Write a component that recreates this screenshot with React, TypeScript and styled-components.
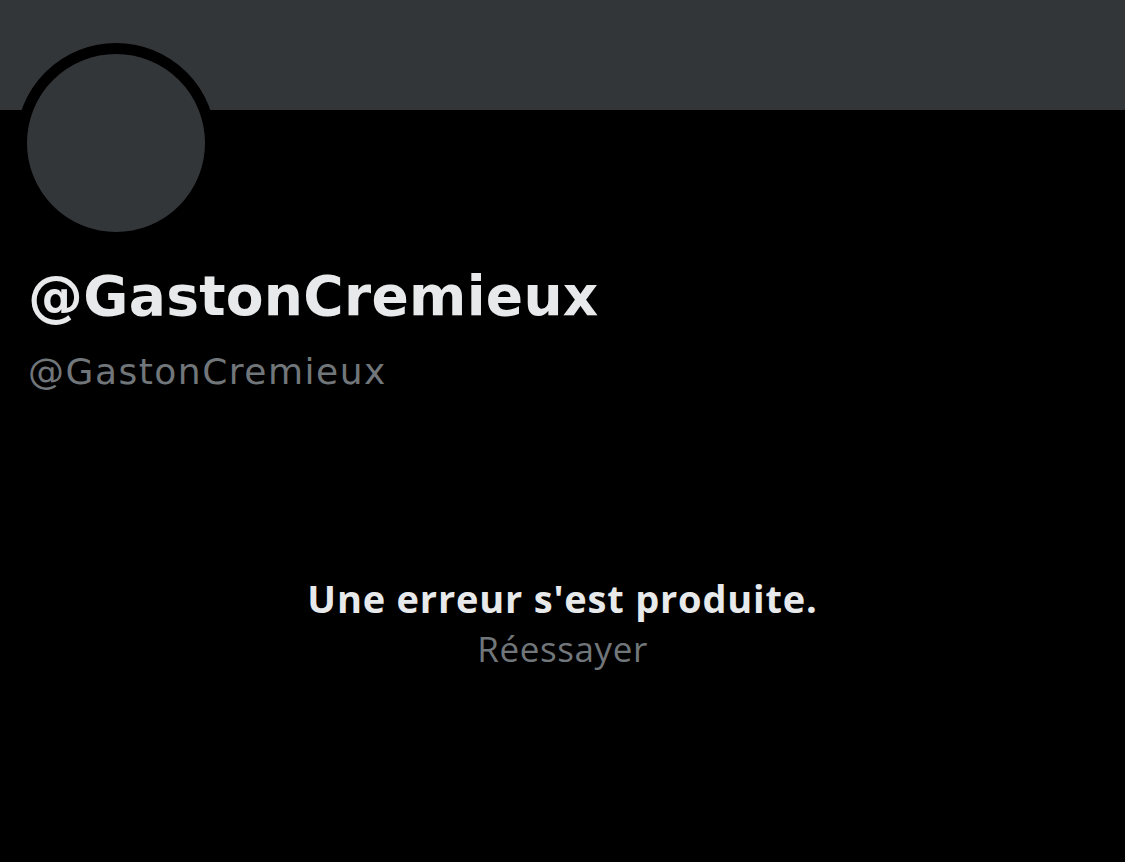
import React from 'react';
import { styled, createGlobalStyle } from 'styled-components';

const GlobalStyle = createGlobalStyle`
  html, body {
    margin: 0;
    padding: 0;
    background: #000;
  }
  body {
    font-family: "Open Sans", "Liberation Sans", Arial, sans-serif;
    -webkit-font-smoothing: antialiased;
  }
`;

export default function App() {
  return (
    <Page>
      <GlobalStyle />
      <Banner />
      <ProfileHead>
        <Avatar />
        <DisplayName>@GastonCremieux</DisplayName>
        <Handle>@GastonCremieux</Handle>
      </ProfileHead>
      <ErrorBlock>
        <ErrorTitle>Une erreur s'est produite.</ErrorTitle>
        <RetryButton type="button">Réessayer</RetryButton>
      </ErrorBlock>
    </Page>
  );
}

const Page = styled.div`
  width: 1125px;
  height: 862px;
  background: #000;
  display: flex;
  flex-direction: column;
  overflow: hidden;
`;

const Banner = styled.div`
  height: 110px;
  background: #333639;
  flex-shrink: 0;
`;

const ProfileHead = styled.div`
  display: flex;
  flex-direction: column;
  align-items: flex-start;
  padding: 0 28px;
`;

const Avatar = styled.div`
  width: 178px;
  height: 178px;
  border-radius: 50%;
  background: #333639;
  border: 11px solid #000;
  margin: -67px 0 0 -12px;
`;

const DisplayName = styled.h1`
  margin: 20px 0 0;
  font-family: "DejaVu Sans", "Open Sans", sans-serif;
  font-size: 55px;
  font-weight: 700;
  line-height: 66px;
  letter-spacing: 0.3px;
  color: #e7e9ea;
`;

const Handle = styled.div`
  margin-top: 21px;
  font-family: "DejaVu Sans", "Open Sans", sans-serif;
  font-size: 36px;
  line-height: 44px;
  letter-spacing: 1.5px;
  color: #71767b;
`;

const ErrorBlock = styled.div`
  display: flex;
  flex-direction: column;
  align-items: center;
  margin-top: 180px;
  gap: 7px;
`;

const ErrorTitle = styled.div`
  font-size: 38px;
  font-weight: 700;
  line-height: 48px;
  letter-spacing: 0.8px;
  color: #e7e9ea;
`;

const RetryButton = styled.button`
  background: none;
  border: none;
  padding: 0;
  font-family: inherit;
  font-size: 35px;
  line-height: 40px;
  letter-spacing: 0.6px;
  color: #71767b;
  cursor: pointer;
`;
